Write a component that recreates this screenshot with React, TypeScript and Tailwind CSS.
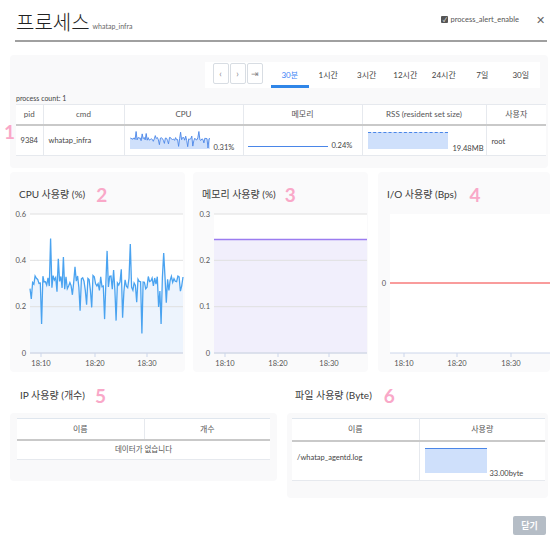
import React from 'react';

const rnd = (i: number) => {
  const x = Math.sin(i * 12.9898 + 78.233) * 43758.5453;
  return x - Math.floor(x);
};

// CPU 값 시리즈 (결정적)
const CPU_DATA = Array.from({ length: 120 }, (_, i) => {
  const base = 0.3 + (rnd(i) - 0.5) * 0.07;
  if (rnd(i + 500) > 0.78) return 0.08 + rnd(i + 900) * 0.44;
  return base;
});

const TABS = ['30분', '1시간', '3시간', '12시간', '24시간', '7일', '30일'];

const Num: React.FC<{ n: string }> = ({ n }) => (
  <span className="text-[19px] font-bold text-[#f9a8c8] leading-none">{n}</span>
);

const linePath = (data: number[], x0: number, x1: number, yFor: (v: number) => number) =>
  data
    .map((v, i) => {
      const x = x0 + ((x1 - x0) * i) / (data.length - 1);
      return `${i === 0 ? 'M' : 'L'}${x.toFixed(1)},${yFor(v).toFixed(1)}`;
    })
    .join(' ');

const XTicks: React.FC<{ xs: number[]; y: number }> = ({ xs, y }) => (
  <>
    {xs.map((x, i) => (
      <g key={x}>
        <line x1={x} x2={x} y1={y} y2={y + 4} stroke="#ccd6eb" />
        <text x={x} y={y + 13} textAnchor="middle" fontSize="7.5" fill="#555">
          {['18:10', '18:20', '18:30'][i]}
        </text>
      </g>
    ))}
  </>
);

const CpuChart = () => {
  const top = 9, bottom = 148, l = 20, r = 173;
  const yFor = (v: number) => bottom - (v / 0.6) * (bottom - top);
  const d = linePath(CPU_DATA, l, r, yFor);
  return (
    <svg width="175" height="167" className="block">
      <rect x={l} y={top} width={r - l} height={bottom - top} fill="#fff" />
      <path d={`${d} L${r},${bottom} L${l},${bottom} Z`} fill="#edf4fd" />
      {[0.6, 0.4, 0.2, 0].map((v) => (
        <g key={v}>
          <line x1={l} x2={r} y1={yFor(v)} y2={yFor(v)} stroke="#e0e0e0" />
          <text x={16} y={yFor(v) + 2.5} textAnchor="end" fontSize="7.5" fill="#555">
            {v === 0 ? '0' : v}
          </text>
        </g>
      ))}
      <path d={d} fill="none" stroke="#4aa3f0" strokeWidth="1.3" />
      <line x1={l} x2={r} y1={bottom} y2={bottom} stroke="#ccd6eb" />
      <XTicks xs={[31, 85, 137]} y={bottom} />
    </svg>
  );
};

const MemChart = () => {
  const top = 9, bottom = 148, l = 21, r = 174;
  const yFor = (v: number) => bottom - (v / 0.3) * (bottom - top);
  return (
    <svg width="175" height="167" className="block">
      <rect x={l} y={top} width={r - l} height={bottom - top} fill="#fff" />
      <rect x={l} y={yFor(0.245)} width={r - l} height={bottom - yFor(0.245)} fill="#f1effc" />
      {[0.3, 0.2, 0.1, 0].map((v) => (
        <g key={v}>
          <line x1={l} x2={r} y1={yFor(v)} y2={yFor(v)} stroke="#e0e0e0" />
          <text x={17} y={yFor(v) + 2.5} textAnchor="end" fontSize="7.5" fill="#555">
            {v === 0 ? '0' : v}
          </text>
        </g>
      ))}
      <line x1={l} x2={r} y1={yFor(0.245)} y2={yFor(0.245)} stroke="#9b7cf0" strokeWidth="1.6" />
      <line x1={l} x2={r} y1={bottom} y2={bottom} stroke="#ccd6eb" />
      <XTicks xs={[32, 85, 136]} y={bottom} />
    </svg>
  );
};

const IoChart = () => {
  const top = 9, bottom = 148, l = 12, r = 172;
  return (
    <svg width="172" height="167" className="block">
      <rect x={l} y={top} width={r - l} height={bottom - top} fill="#fff" />
      <text x={8} y={80.5} textAnchor="end" fontSize="7.5" fill="#555">0</text>
      <line x1={l} x2={r} y1={78} y2={78} stroke="#f77b7b" strokeWidth="1.5" />
      <line x1={l} x2={r} y1={bottom} y2={bottom} stroke="#ccd6eb" />
      <XTicks xs={[26, 79, 133]} y={bottom} />
    </svg>
  );
};

const Spark = () => {
  const d = linePath(CPU_DATA.slice(10, 90), 0, 80, (v) =>
    Math.max(0.5, Math.min(17, 8 - (v - 0.3) * 48))
  );
  return (
    <svg width="80" height="18" className="block">
      <path d={`${d} L80,18 L0,18 Z`} fill="#cfe0fb" />
      <path d={d} fill="none" stroke="#4a86e8" strokeWidth="0.9" />
    </svg>
  );
};

const App: React.FC = () => {
  return (
    <div className="relative w-[560px] h-[543px] bg-white overflow-hidden font-[Lato,'Noto_Sans_CJK_KR',sans-serif] text-[#333]">
      {/* Header */}
      <div className="mx-[15px] w-[532px] h-[42px] border-b-2 border-[#a0a0a0] flex items-end pb-[8px]">
        <span className="text-[20px] font-light text-[#222] leading-none ml-[1px]">프로세스</span>
        <span className="text-[7px] text-[#666] ml-[3px] mb-[1px]">whatap_infra</span>
        <div className="ml-auto flex items-center self-start mt-[14px]">
          <span className="w-[7px] h-[7px] bg-[#555] rounded-[1px] flex items-center justify-center text-white text-[6px] leading-none">✓</span>
          <span className="text-[7.5px] text-[#555] ml-[2px]">process_alert_enable</span>
          <span className="text-[11px] text-[#666] ml-[17px] mr-[2px] leading-none">✕</span>
        </div>
      </div>

      {/* Top process card */}
      <div className="relative mx-[10px] mt-[13px] w-[538px] h-[113px] bg-[#f9f9fa] rounded-[4px]">
        <div className="flex justify-end pt-[7px] pr-[8px]">
          <div className="flex items-end bg-white h-[26px] pl-[8px]">
            <div className="flex gap-[1px] mb-[4px] mr-[8px]">
              {['‹', '›', '⇥'].map((c) => (
                <div key={c} className="w-[16px] h-[21px] border border-[#d8dde3] rounded-[2px] flex items-center justify-center text-[9px] text-[#888]">
                  {c}
                </div>
              ))}
            </div>
            {TABS.map((t, i) => (
              <div
                key={t}
                className={`w-[38.5px] h-[26px] flex items-center justify-center text-[8px] ${
                  i === 0 ? 'text-[#3b82f6] border-b-[3px] border-[#2f86e8] pt-[3px]' : 'text-[#444]'
                }`}
              >
                {t}
              </div>
            ))}
          </div>
        </div>
        <div className="text-[7px] text-[#444] ml-[6px] mt-[7px] leading-none">process count: 1</div>
        <table className="ml-[6px] mt-[2px] w-[530px] bg-white border-collapse table-fixed text-[8px]">
          <thead>
            <tr className="h-[20px] border-t border-[#e6e9ee] border-b-2 border-b-[#c9c9c9] text-[#555]">
              <th className="w-[27px] font-normal">pid</th>
              <th className="w-[81px] font-normal border-l border-[#e6e9ee]">cmd</th>
              <th className="w-[119px] font-normal border-l border-[#e6e9ee]">CPU</th>
              <th className="w-[119px] font-normal border-l border-[#e6e9ee]">메모리</th>
              <th className="w-[124px] font-normal border-l border-[#e6e9ee]">RSS (resident set size)</th>
              <th className="font-normal border-l border-[#e6e9ee]">사용자</th>
            </tr>
          </thead>
          <tbody>
            <tr className="h-[31px] border-b border-[#e6e9ee] text-[7.5px] text-[#444]">
              <td className="text-center">9384</td>
              <td className="border-l border-[#e6e9ee] pl-[5px]">whatap_infra</td>
              <td className="border-l border-[#e6e9ee] pl-[5px]">
                <div className="flex items-end gap-[4px]">
                  <Spark />
                  <span className="leading-none mb-[-2px]">0.31%</span>
                </div>
              </td>
              <td className="border-l border-[#e6e9ee] pl-[4px]">
                <div className="flex items-end gap-[4px] mt-[8px]">
                  <div className="w-[80px] h-[1.5px] bg-[#4a86e8]" />
                  <span className="leading-none mb-[-2px]">0.24%</span>
                </div>
              </td>
              <td className="border-l border-[#e6e9ee] pl-[5px]">
                <div className="flex items-end gap-[5px]">
                  <div className="w-[80px] h-[17px] bg-[#cfe0fb] border-t border-dashed border-[#4a86e8]" />
                  <span className="leading-none mb-[-4px]">19.48MB</span>
                </div>
              </td>
              <td className="border-l border-[#e6e9ee] pl-[5px] align-top pt-[10px]">root</td>
            </tr>
          </tbody>
        </table>
      </div>
      <div className="absolute left-[4px] top-[121px]"><Num n="1" /></div>

      {/* Chart row */}
      <div className="flex mx-[10px] mt-[4px] gap-[8px]">
        {[
          { t: 'CPU 사용량 (%)', n: '2', c: <CpuChart />, w: 'w-[175px]', g: 'gap-[11px]' },
          { t: '메모리 사용량 (%)', n: '3', c: <MemChart />, w: 'w-[175px]', g: 'gap-[9px]' },
          { t: 'I/O 사용량 (Bps)', n: '4', c: <IoChart />, w: 'w-[172px] ml-[2px]', g: 'gap-[13px]' },
        ].map((p) => (
          <div key={p.n} className={`${p.w} h-[200px] bg-[#fafafb] rounded-[4px]`}>
            <div className={`flex items-center ${p.g} h-[33px] pt-[12px] pl-[9px]`}>
              <span className="text-[10px] text-[#3a3a3a]">{p.t}</span>
              <Num n={p.n} />
            </div>
            {p.c}
          </div>
        ))}
      </div>

      {/* Bottom row */}
      <div className="flex mx-[10px] mt-[0px] gap-[10px]">
        <div className="w-[267px]">
          <div className="flex items-center gap-[10px] h-[41px] pt-[6px] pl-[10px]">
            <span className="text-[10px] text-[#3a3a3a]">IP 사용량 (개수)</span>
            <Num n="5" />
          </div>
          <div className="bg-[#f9f9fa] rounded-[4px] h-[68px] pt-[5px] px-[7px]">
            <table className="w-full bg-white border-collapse table-fixed text-[8px] text-[#555]">
              <thead>
                <tr className="h-[21px] border-t border-[#dfe6ee] border-b-2 border-b-[#c9c9c9]">
                  <th className="w-[127px] font-normal">이름</th>
                  <th className="font-normal border-l border-[#e6e9ee]">개수</th>
                </tr>
              </thead>
              <tbody>
                <tr className="h-[20px] border-b border-[#e6e9ee] text-[7.5px]">
                  <td colSpan={2} className="text-center">데이터가 없습니다</td>
                </tr>
              </tbody>
            </table>
          </div>
        </div>
        <div className="w-[261px]">
          <div className="flex items-center gap-[12px] h-[41px] pt-[6px] pl-[8px]">
            <span className="text-[10px] text-[#3a3a3a]">파일 사용량 (Byte)</span>
            <Num n="6" />
          </div>
          <div className="bg-[#f9f9fa] rounded-[4px] h-[85px] pt-[5px] px-[5px]">
            <table className="w-[253px] bg-white border-collapse table-fixed text-[8px] text-[#555]">
              <thead>
                <tr className="h-[22px] border-t border-[#dfe6ee] border-b-2 border-b-[#c9c9c9]">
                  <th className="w-[127px] font-normal">이름</th>
                  <th className="font-normal border-l border-[#e6e9ee]">사용량</th>
                </tr>
              </thead>
              <tbody>
                <tr className="h-[40px] border-b border-[#e6e9ee] text-[7.5px] text-[#444]">
                  <td className="pl-[5px] align-top pt-[10px]">/whatap_agentd.log</td>
                  <td className="border-l border-[#e6e9ee] pl-[5px]">
                    <div className="flex items-end gap-[3px]">
                      <div className="w-[62px] h-[25px] bg-[#cfe0fb] border-t border-[#4a86e8]" />
                      <span className="leading-none mb-[-4px]">33.00byte</span>
                    </div>
                  </td>
                </tr>
              </tbody>
            </table>
          </div>
        </div>
      </div>

      {/* Footer */}
      <div className="flex justify-end mr-[14px] mt-[18px]">
        <button className="w-[33px] h-[19px] bg-[#b5bdc6] rounded-[2px] text-white text-[9px] font-bold">닫기</button>
      </div>
    </div>
  );
};

export default App;
